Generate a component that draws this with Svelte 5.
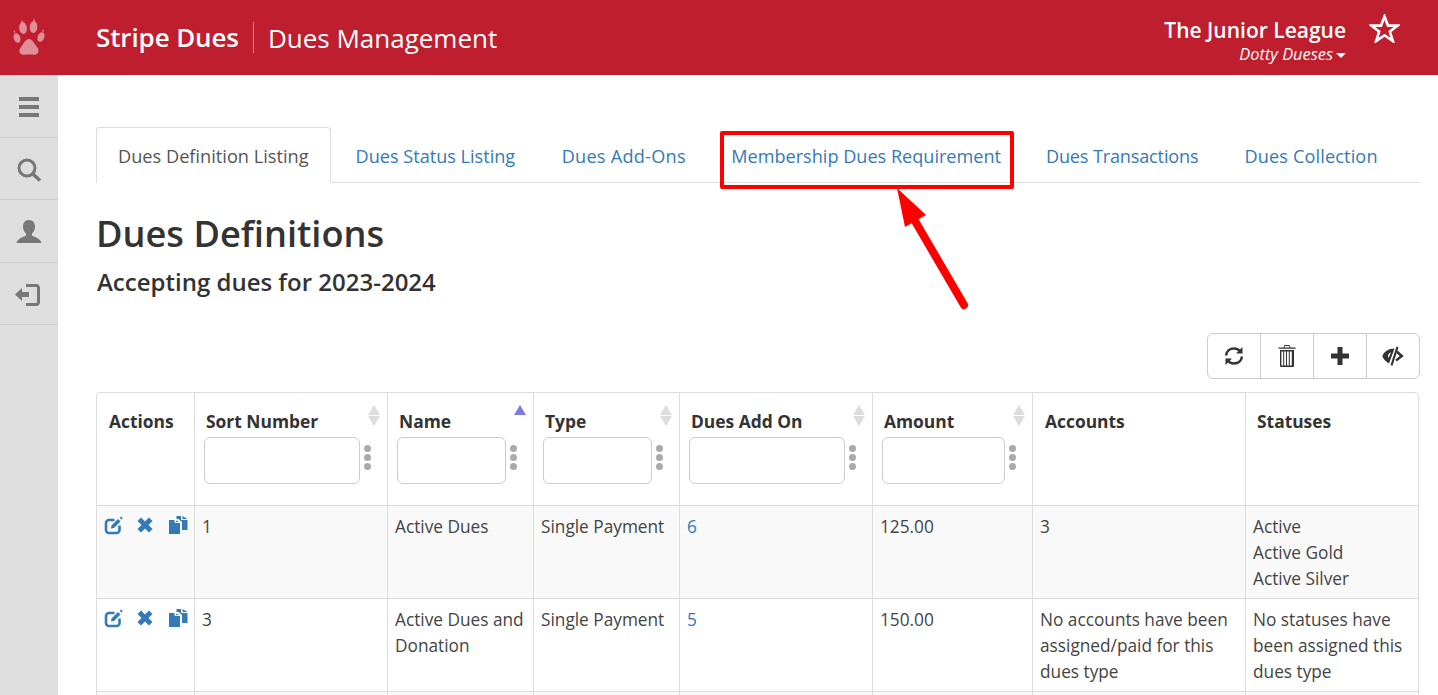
<script>
  const tabs = ['Dues Status Listing', 'Dues Add-Ons', 'Membership Dues Requirement', 'Dues Transactions', 'Dues Collection'];
  const columns = [
    { key: 'sort', label: 'Sort Number', filter: true, sort: 'both' },
    { key: 'name', label: 'Name', filter: true, sort: 'up' },
    { key: 'type', label: 'Type', filter: true, sort: 'both' },
    { key: 'addon', label: 'Dues Add On', filter: true, sort: 'both' },
    { key: 'amount', label: 'Amount', filter: true, sort: 'both' },
    { key: 'accounts', label: 'Accounts' },
    { key: 'statuses', label: 'Statuses' }
  ];
  const rows = [
    { sort: '1', name: 'Active Dues', type: 'Single Payment', addon: '6', amount: '125.00', accounts: '3', statuses: ['Active', 'Active Gold', 'Active Silver'] },
    { sort: '3', name: 'Active Dues and Donation', type: 'Single Payment', addon: '5', amount: '150.00', accounts: 'No accounts have been assigned/paid for this dues type', statuses: ['No statuses have been assigned this dues type'] }
  ];
</script>

<div class="page">
  <header class="topbar">
    <div class="logo">
      <svg width="34" height="40" viewBox="0 0 34 40" fill="#e08f99">
        <ellipse cx="5" cy="21" rx="3.300" ry="5" transform="rotate(-18 5 21)"/>
        <ellipse cx="11" cy="11" rx="3.800" ry="6" transform="rotate(-6 11 11)"/>
        <ellipse cx="21.500" cy="10" rx="3.800" ry="6" transform="rotate(4 21.500 10)"/>
        <ellipse cx="29" cy="20" rx="3.300" ry="5" transform="rotate(22 29 20)"/>
        <path d="M17 22c3 0 4.500 3 6.500 6 2 2.500 4 5 2.500 8-1.500 2.500-5 1.500-9 1.500s-7.500 1-9-1.500c-1.500-3 .5-5.500 2.500-8 2-3 3.500-6 6.500-6z"/>
        <path d="M10 3l1 2.500h-2zM22 1.500l1 2.500h-2zM2 13l1.500 2.500h-2zM31 12l1 2.500h-2z"/>
      </svg>
    </div>
    <div class="brand">Stripe Dues</div>
    <div class="section">Dues Management</div>
    <div class="org">
      <div class="org-name">The Junior League</div>
      <div class="org-user">Dotty Dueses<span class="caret"></span></div>
    </div>
    <svg class="star" width="31" height="29" viewBox="2 2 26 24.300">
      <path d="M15 4l2.900 7.700h8.200l-6.600 5 2.500 8-7-4.900-7 4.900 2.500-8-6.600-5h8.200z" fill="none" stroke="#fff" stroke-width="2.200"/>
    </svg>
  </header>

  <div class="body">
    <nav class="side">
      <div class="side-item">
        <svg width="20" height="20" viewBox="0 0 20 20" fill="#777"><rect y="0" width="20" height="4"/><rect y="8" width="20" height="4"/><rect y="16" width="20" height="4"/></svg>
      </div>
      <div class="side-item">
        <svg width="26" height="26" viewBox="0 0 26 26" fill="none" stroke="#777"><circle cx="11" cy="11" r="8" stroke-width="3"/><path d="M17 17l7 6.500" stroke-width="3.500"/></svg>
      </div>
      <div class="side-item">
        <svg width="26" height="26" viewBox="0 0 26 26" fill="#777"><path d="M13 1c3.500 0 6 2.800 6 6.500 0 3-1.300 5.500-3 7v2c1 1 8.500 2.500 9.500 7.500H.5c1-5 8.500-6.500 9.500-7.500v-2c-1.700-1.500-3-4-3-7C7 3.800 9.500 1 13 1z"/></svg>
      </div>
      <div class="side-item logout">
        <svg width="26" height="24" viewBox="0 0 26 24" fill="#777"><path d="M0 11.500l7-6.500v4h7v5H7v4z"/><path d="M11 1h10c2.500 0 4 1.500 4 4v14c0 2.500-1.500 4-4 4H11v-3h10c.7 0 1-.3 1-1V5c0-.7-.3-1-1-1H11z"/></svg>
      </div>
    </nav>

    <main class="content">
      <ul class="tabs">
        <li class="tab active">Dues Definition Listing</li>
        {#each tabs as tab}
          <li class="tab">{tab}</li>
        {/each}
      </ul>

      <h1>Dues Definitions</h1>
      <h2>Accepting dues for 2023-2024</h2>

      <div class="toolbar">
        <button aria-label="Refresh">
          <svg width="20" height="20" viewBox="0 0 20 20" fill="none" stroke="#333" stroke-width="2.400"><path d="M2 9.500C2.500 5.500 5.500 2.500 10 2.500c2.500 0 4.500 1 6 2.800"/><path d="M18 10.500c-.5 4-3.500 7-8 7-2.500 0-4.500-1-6-2.800"/><path d="M18.500 1v6.500H12zM1.500 19v-6.500H8z" fill="#333" stroke="none"/></svg>
        </button>
        <button aria-label="Delete">
          <svg width="18" height="22" viewBox="0 0 18 22" fill="#333"><path d="M6.500 0h5l1 2.500H17.500v1.200H.5V2.500H5.500zM7 1l-.5 1.500h5L11 1z"/><path fill-rule="evenodd" d="M2 5h14v16a1 1 0 0 1-1 1H3a1 1 0 0 1-1-1zM3.400 6.500v14h1.800v-14zM6.200 6.500v14H8v-14zM9 6.500v14h1.800v-14zM11.800 6.500v14h2v-14z"/></svg>
        </button>
        <button aria-label="Add">
          <svg width="18" height="18" viewBox="0 0 18 18" fill="#333"><path d="M6.500 0h5v6.500H18v5h-6.500V18h-5v-6.500H0v-5h6.500z"/></svg>
        </button>
        <button aria-label="Hide columns">
          <svg width="22" height="20" viewBox="0 0 22 20" fill="#333"><path fill-rule="evenodd" d="M12.500 2.500L7 17.500C4 15.800 1.200 13 .3 10 2 5.800 6.500 2.500 12.500 2.500zM9 6.500C7 7 6 8.500 6 10c0 .8.200 1.500.5 2z"/><path d="M14.500 .5l2 .7-6 18.600-2-.7z"/><path d="M15.500 4.500l6.300 5.500-7 5.500-1.400-2L17.800 10l-3.500-3z"/></svg>
        </button>
      </div>

      <table>
        <colgroup>
          <col class="c-actions" /><col class="c-sort" /><col class="c-name" /><col class="c-type" /><col class="c-addon" /><col class="c-amount" /><col class="c-accounts" /><col class="c-statuses" />
        </colgroup>
        <thead>
          <tr>
            <th class="h-actions"><div class="th-label">Actions</div></th>
            {#each columns as col}
              <th class={'h-' + col.key}>
                <div class="th-label">{col.label}</div>
                {#if col.sort === 'both'}
                  <span class="sort up"></span><span class="sort down"></span>
                {:else if col.sort === 'up'}
                  <span class="sort up on"></span>
                {/if}
                {#if col.filter}
                  <div class="filter">
                    <input type="text" aria-label={col.label} />
                    <span class="dots"><i></i><i></i><i></i></span>
                  </div>
                {/if}
              </th>
            {/each}
          </tr>
        </thead>
        <tbody>
          {#each rows as row}
            <tr>
              <td class="acts">
                <svg class="i-edit" width="20" height="19" viewBox="0 0 20 19" fill="none"><path d="M15.500 9.500V14a3 3 0 0 1-3 3H5a3 3 0 0 1-3-3V7a3 3 0 0 1 3-3h5.500" stroke="#337ab7" stroke-width="2.600"/><path d="M7.500 9.500L14 3l2.500 2.500L10 12l-3 .5z" fill="#337ab7"/><path d="M17 .5l1.800 1.800-1.300 1.300-1.800-1.800z" fill="#337ab7"/></svg>
                <svg class="i-x" width="16" height="16" viewBox="0 0 16 16" fill="#337ab7"><path d="M4 .5L8 4.500 12 .5 15.500 4 11.500 8 15.500 12 12 15.500 8 11.500 4 15.500.5 12 4.500 8 .5 4z"/></svg>
                <svg class="i-copy" width="19" height="18" viewBox="0 0 19 18" fill="#337ab7"><path d="M0 4h5.500v1.500c0 1 .5 1.500 1.500 1.500h4v11H0z"/><path d="M7 4.500v1.500h3zM7.500 0H12v3c0 .7.300 1 1 1h5.500v10H13V6l-3.500-3H7.500z"/><path d="M13.500 0l5 3h-5z"/></svg>
              </td>
              <td>{row.sort}</td>
              <td>{row.name}</td>
              <td>{row.type}</td>
              <td><span class="link">{row.addon}</span></td>
              <td>{row.amount}</td>
              <td>{row.accounts}</td>
              <td>{#each row.statuses as s}<div>{s}</div>{/each}</td>
            </tr>
          {/each}
          <tr class="next">
            <td></td><td></td><td></td><td></td><td></td><td></td><td></td><td></td>
          </tr>
        </tbody>
      </table>

      <div class="callout"></div>
      <svg class="arrow" width="80" height="126" viewBox="0 0 80 126">
        <path d="M4 3L33 30 12 42z" fill="#f00"/>
        <path d="M22 36L71 120" stroke="#f00" stroke-width="8" stroke-linecap="round" fill="none"/>
      </svg>
    </main>
  </div>
</div>

<style>
  :global(body) {
    margin: 0;
    background: #fff;
    font-family: "Open Sans", "Noto Sans", sans-serif;
    color: #333;
  }
  .page {
    height: 695px;
    overflow: hidden;
    display: flex;
    flex-direction: column;
  }
  .topbar {
    height: 75px;
    flex: none;
    background: #be1e2d;
    color: #fff;
    display: flex;
    align-items: center;
  }
  .logo {
    width: 96px;
    padding-left: 12px;
    box-sizing: border-box;
    display: flex;
    margin-top: -1px;
  }
  .brand {
    font-size: 26px;
    font-weight: 600;
    letter-spacing: -0.12px;
    padding-right: 14px;
    border-right: 1px solid #dc8a93;
    line-height: 31px;
  }
  .section {
    font-size: 26px;
    padding-left: 14px;
  }
  .org {
    margin-left: auto;
    text-align: right;
    margin-top: 5px;
  }
  .org-name {
    font-size: 21px;
    font-weight: 600;
    line-height: 26px;
  }
  .org-user {
    font-size: 16.400px;
    font-style: italic;
    line-height: 20px;
    margin-top: 1px;
  }
  .caret {
    display: inline-block;
    margin-left: 3px;
    vertical-align: 2px;
    border-top: 5px solid #fff;
    border-left: 5px solid transparent;
    border-right: 5px solid transparent;
  }
  .star {
    margin: -18px 38px 0 23px;
    flex: none;
  }
  .body {
    flex: 1;
    display: flex;
    min-height: 0;
  }
  .side {
    width: 58px;
    flex: none;
    background: #dedede;
  }
  .side-item {
    padding-top: 3px;
    height: 58.500px;
    border-bottom: 1px solid #ccc;
    display: flex;
    align-items: center;
    justify-content: center;
  }
  .side-item.logout {
    padding-right: 2px;
    padding-top: 4px;
    height: 57.500px;
  }
  .content {
    position: relative;
    flex: 1;
    min-width: 0;
    padding: 52px 18px 0 38px;
  }
  .tabs {
    display: flex;
    list-style: none;
    margin: 0;
    padding: 0;
    height: 55px;
    border-bottom: 1px solid #ddd;
  }
  .tab {
    height: 55px;
    padding: 0 23px;
    box-sizing: border-box;
    line-height: 59px;
    font-size: 18.100px;
    color: #337ab7;
    white-space: nowrap;
  }
  .tab:nth-child(2) {
    padding-left: 25px;
  }
  .tab:nth-child(3) {
    padding-left: 24px;
    letter-spacing: 0.27px;
  }
  .tab:nth-child(3) {
    margin-left: -0.5px;
  }
  .tab:nth-child(4) {
    margin-left: -0.5px;
  }
  .tab:nth-child(5) {
    padding-left: 22px;
    letter-spacing: -0.16px;
  }
  .tab:nth-child(6) {
    letter-spacing: 0.15px;
  }
  .tab.active {
    color: #555;
    font-size: 18.200px;
    padding: 0 21px;
    height: 56px;
    line-height: 57px;
    background: #fff;
    border: 1px solid #ddd;
    border-bottom: 0;
    border-radius: 4px 4px 0 0;
  }
  h1 {
    margin: 24px 0 0 0;
    font-size: 36.200px;
    font-weight: 600;
    line-height: 52px;
  }
  h2 {
    margin: 7px 0 0 1px;
    font-size: 24px;
    font-weight: 600;
    line-height: 32px;
  }
  .toolbar {
    display: flex;
    justify-content: flex-end;
    margin-top: 35px;
  }
  .toolbar button {
    width: 54px;
    height: 46px;
    margin-left: -1px;
    padding: 0;
    background: #fff;
    border: 1px solid #ccc;
    display: flex;
    align-items: center;
    justify-content: center;
  }
  .toolbar button:first-child {
    border-radius: 6px 0 0 6px;
  }
  .toolbar button:last-child {
    border-radius: 0 6px 6px 0;
  }
  table {
    margin-top: 13px;
    width: 1323px;
    table-layout: fixed;
    border-collapse: separate;
    border-spacing: 0;
    border: 1px solid #ddd;
    border-radius: 4px;
    font-size: 17.250px;
    line-height: 26px;
  }
  .c-actions { width: 98px; }
  .c-sort { width: 193px; }
  .c-name { width: 146px; }
  .c-type { width: 146px; }
  .c-addon { width: 193px; }
  .c-amount { width: 160px; }
  .c-accounts { width: 213px; }
  .c-statuses { width: auto; }
  th {
    position: relative;
    height: 113px;
    box-sizing: border-box;
    padding: 15px 11px 0 11px;
    vertical-align: top;
    text-align: left;
    font-size: 17.400px;
    font-weight: 700;
    border-right: 1px solid #ddd;
    border-bottom: 1px solid #ddd;
  }
  th.h-actions, th.h-accounts {
    padding-left: 12px;
  }
  th:last-child, td:last-child {
    border-right: 0;
  }
  .th-label {
    line-height: 26px;
  }
  .sort {
    position: absolute;
    right: 7px;
    width: 0;
    height: 0;
    border-left: 6px solid transparent;
    border-right: 6px solid transparent;
  }
  .sort.up {
    top: 12px;
    border-bottom: 10px solid #ddd;
  }
  .sort.down {
    top: 23px;
    border-top: 10px solid #ddd;
  }
  .sort.up.on {
    border-bottom-color: #7b7be0;
  }
  .filter {
    display: flex;
    align-items: flex-start;
    margin: 3px 5px 0 -2px;
    gap: 4px;
  }
  .filter input {
    flex: 1;
    min-width: 0;
    height: 47px;
    box-sizing: border-box;
    border: 1px solid #ccc;
    border-radius: 6px;
    background: #fff;
    padding: 0;
  }
  .dots {
    display: flex;
    flex-direction: column;
    gap: 2px;
    flex: none;
    width: 7px;
    margin-top: 8px;
  }
  .dots i {
    width: 7px;
    height: 7px;
    border-radius: 50%;
    background: #aaa;
  }
  td {
    padding: 8px 6px 6px 7px;
    height: 93px;
    box-sizing: border-box;
    vertical-align: top;
    border-right: 1px solid #ddd;
    border-bottom: 1px solid #ddd;
    color: #444;
  }
  tbody tr:nth-child(odd) td {
    background: #f9f9f9;
  }
  tbody tr:nth-child(even) td {
    background: #fff;
  }
  .acts {
    padding: 10px 0 0 7px;
    white-space: nowrap;
    font-size: 0;
  }
  .acts svg {
    vertical-align: top;
  }
  .i-x {
    margin-left: 13px;
    margin-top: 1px;
  }
  .i-copy {
    margin-left: 16px;
  }
  .link {
    color: #337ab7;
  }
  .callout {
    position: absolute;
    left: 662px;
    top: 56px;
    width: 294px;
    height: 58px;
    box-sizing: border-box;
    border: 4px solid #f00;
    border-radius: 2px;
  }
  .arrow {
    position: absolute;
    left: 835px;
    top: 110px;
    overflow: visible;
  }
</style>
